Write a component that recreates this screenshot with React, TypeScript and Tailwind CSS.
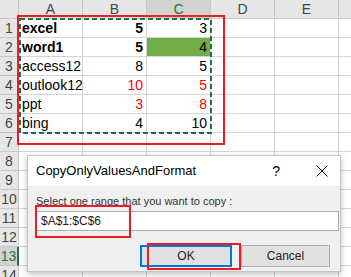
import React from 'react';

type Cell = { v: string; bold?: boolean; red?: boolean; fill?: boolean };

const rows: Cell[][] = [
    [{ v: 'excel', bold: true }, { v: '5', bold: true }, { v: '3' }],
    [{ v: 'word1', bold: true }, { v: '5', bold: true }, { v: '4', fill: true }],
    [{ v: 'access12' }, { v: '8' }, { v: '5' }],
    [{ v: 'outlook12' }, { v: '10', red: true }, { v: '5', red: true }],
    [{ v: 'ppt' }, { v: '3', red: true }, { v: '8', red: true }],
    [{ v: 'bing' }, { v: '4' }, { v: '10' }],
];

const colNames = ['A', 'B', 'C', 'D', 'E'];

const App: React.FC = () => {
    return (
        <div className="relative w-[351px] h-[277px] overflow-hidden bg-white font-['Liberation_Sans',Arial,sans-serif] text-[14px] text-black">
            {/* Column headers */}
            <div className="flex h-[19px]">
                <div className="w-[19px] shrink-0 bg-[#e6e6e6] border-r border-b border-[#c6c6c6]" />
                {colNames.map((c) => (
                    <div
                        key={c}
                        className={
                            c === 'C'
                                ? 'w-[64px] shrink-0 flex items-center justify-center bg-[#d2d2d2] border-r border-b border-[#c6c6c6] text-[#217346]'
                                : 'w-[64px] shrink-0 flex items-center justify-center bg-[#e6e6e6] border-r border-b border-[#c6c6c6] text-[#444]'
                        }
                    >
                        {c}
                    </div>
                ))}
                <div className="flex-1 bg-[#e6e6e6] border-b border-[#c6c6c6]" />
            </div>

            {/* Rows */}
            {Array.from({ length: 14 }).map((_, i) => {
                const data = rows[i];
                const active = i === 12;
                return (
                    <div key={i} className="flex h-[19px]">
                        <div
                            className={
                                active
                                    ? 'w-[19px] shrink-0 flex items-center justify-center bg-[#d2d2d2] border-b border-[#c6c6c6] border-r-2 border-r-[#217346] text-[#217346]'
                                    : 'w-[19px] shrink-0 flex items-center justify-center bg-[#e6e6e6] border-r border-b border-[#c6c6c6] text-[#444]'
                            }
                        >
                            {i + 1}
                        </div>
                        {colNames.map((c, j) => {
                            const cell = data ? data[j] : undefined;
                            return (
                                <div
                                    key={c}
                                    className={
                                        (cell && cell.fill ? 'bg-[#70ad47] ' : '') +
                                        'w-[64px] shrink-0 flex items-center border-r border-b border-[#d4d4d4] px-[3px] overflow-visible whitespace-nowrap ' +
                                        (j === 0 ? 'justify-start' : 'justify-end')
                                    }
                                >
                                    {cell && (
                                        <span
                                            className={
                                                (cell.bold ? 'font-bold ' : '') +
                                                (cell.red ? 'text-[#ff0000]' : 'text-black')
                                            }
                                        >
                                            {cell.v}
                                        </span>
                                    )}
                                </div>
                            );
                        })}
                        <div className="flex-1 border-b border-[#d4d4d4]" />
                    </div>
                );
            })}

            {/* Copy marquee */}
            <svg className="absolute left-[19px] top-[18px]" width="194" height="117">
                <rect x="1" y="1" width="191" height="114" fill="none" stroke="#217346" strokeWidth="2" strokeDasharray="5 3" />
            </svg>

            {/* Red highlight on data */}
            <div className="absolute left-[17px] top-[15px] w-[208px] h-[130px] border-2 border-[#ec1c24]" />

            {/* Dialog */}
            <div className="absolute left-[27px] top-[155px] w-[314px] h-[117px] flex flex-col bg-[#f0f0f0] border border-[#c4c4c4] shadow-[0_2px_6px_rgba(0,0,0,0.25)] font-['Liberation_Sans',Arial,sans-serif]">
                <div className="h-[30px] bg-white flex items-center pl-[8px] pr-[12px]">
                    <span className="text-[13px] text-black">CopyOnlyValuesAndFormat</span>
                    <span className="ml-auto text-[14px] text-black">?</span>
                    <svg className="ml-[36px]" width="12" height="12" viewBox="0 0 12 12">
                        <path d="M0.5 0.5 L11.5 11.5 M11.5 0.5 L0.5 11.5" stroke="#111" strokeWidth="1" />
                    </svg>
                </div>
                <div className="flex flex-col px-[8px] pt-[8px]">
                    <span className="text-[11px] leading-[14px] text-[#333]">Select one range that you want to copy :</span>
                    <div className="mt-[3px] h-[20px] w-[303px] bg-white border border-[#adadad] flex items-center px-[4px] text-[12px] text-[#222]">
                        $A$1:$C$6
                    </div>
                    <div className="mt-[14px] flex justify-end gap-[9px] pr-[2px]">
                        <div className="w-[92px] h-[22px] flex items-center justify-center bg-[#e1e1e1] border-2 border-[#0078d7] text-[12px] text-[#222]">
                            OK
                        </div>
                        <div className="w-[89px] h-[22px] flex items-center justify-center bg-[#e1e1e1] border border-[#adadad] text-[12px] text-[#222]">
                            Cancel
                        </div>
                    </div>
                </div>
            </div>

            {/* Red highlights on dialog */}
            <div className="absolute left-[35px] top-[205px] w-[96px] h-[33px] border-2 border-[#ec1c24]" />
            <div className="absolute left-[147px] top-[243px] w-[94px] h-[27px] border-2 border-[#ec1c24]" />
        </div>
    );
};

export default App;
